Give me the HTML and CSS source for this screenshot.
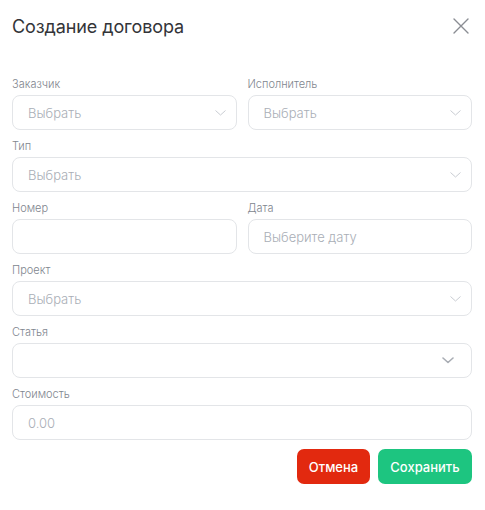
FILE: index.html
```html
<!DOCTYPE html>
<html lang="ru">
<head>
<meta charset="utf-8">
<link rel="stylesheet" href="styles.css">
</head>
<body>
<div class="modal">
  <div class="header">
    <h1 class="title">Создание договора</h1>
    <button class="close" aria-label="Закрыть">
      <svg width="16" height="16" viewBox="0 0 16 16"><path d="M1 1L15 15M15 1L1 15" stroke="#8a8d93" stroke-width="1.4" fill="none" stroke-linecap="round"/></svg>
    </button>
  </div>
  <div class="form">
    <div class="field">
      <div class="label">Заказчик</div>
      <div class="control select"><span class="ph">Выбрать</span><svg class="chev" width="11" height="6" viewBox="0 0 11 6"><path d="M0.5 0.5L5.5 5L10.5 0.5" stroke="#c9ccd2" stroke-width="1" fill="none"/></svg></div>
    </div>
    <div class="field">
      <div class="label">Исполнитель</div>
      <div class="control select"><span class="ph">Выбрать</span><svg class="chev" width="11" height="6" viewBox="0 0 11 6"><path d="M0.5 0.5L5.5 5L10.5 0.5" stroke="#c9ccd2" stroke-width="1" fill="none"/></svg></div>
    </div>
    <div class="field wide">
      <div class="label">Тип</div>
      <div class="control select"><span class="ph">Выбрать</span><svg class="chev" width="11" height="6" viewBox="0 0 11 6"><path d="M0.5 0.5L5.5 5L10.5 0.5" stroke="#c9ccd2" stroke-width="1" fill="none"/></svg></div>
    </div>
    <div class="field">
      <div class="label">Номер</div>
      <div class="control"></div>
    </div>
    <div class="field">
      <div class="label">Дата</div>
      <div class="control"><span class="ph">Выберите дату</span></div>
    </div>
    <div class="field wide">
      <div class="label">Проект</div>
      <div class="control select"><span class="ph">Выбрать</span><svg class="chev" width="11" height="6" viewBox="0 0 11 6"><path d="M0.5 0.5L5.5 5L10.5 0.5" stroke="#c9ccd2" stroke-width="1" fill="none"/></svg></div>
    </div>
    <div class="field wide">
      <div class="label">Статья</div>
      <div class="control select alt"><span class="ph"></span><svg class="chev" width="12" height="7" viewBox="0 0 12 7"><path d="M1 1L6 5.5L11 1" stroke="#a9adb4" stroke-width="1.6" fill="none" stroke-linecap="round" stroke-linejoin="round"/></svg></div>
    </div>
    <div class="field wide">
      <div class="label">Стоимость</div>
      <div class="control"><span class="ph">0.00</span></div>
    </div>
  </div>
  <div class="actions">
    <button class="btn cancel">Отмена</button>
    <button class="btn save">Сохранить</button>
  </div>
</div>
</body>
</html>
```
FILE: styles.css
```css
* { box-sizing: border-box; }
html, body { margin: 0; background: #fff; }
body {
  font-family: "Inter", "Noto Sans", sans-serif;
  color: #333;
}
.modal {
  width: 485px;
  padding: 0 13px 0 12px;
}
.header {
  height: 52px;
  display: flex;
  align-items: center;
  justify-content: space-between;
  margin-bottom: 26px;
}
.title {
  margin: 0;
  font-size: 18px;
  font-weight: 400;
  color: #333438;
  letter-spacing: -0.1px;
}
.close {
  border: 0;
  background: none;
  padding: 0;
  margin-right: 3px;
  width: 16px;
  height: 16px;
  display: flex;
}
.form {
  display: grid;
  grid-template-columns: 1fr 1fr;
  column-gap: 11px;
  row-gap: 10px;
}
.field { display: flex; flex-direction: column; }
.field.wide { grid-column: 1 / 3; }
.label {
  font-size: 11px;
  line-height: 12px;
  font-weight: 300;
  color: #80858e;
  margin-bottom: 5px;
}
.control {
  height: 35px;
  border: 1px solid #e3e5e8;
  border-radius: 8px;
  display: flex;
  align-items: center;
  justify-content: space-between;
  padding: 0 10px 0 15px;
}
.ph {
  font-size: 13px;
  font-weight: 300;
  color: #a9aeb6;
}
.chev { margin-right: 0; }
.select.alt { padding-right: 17px; }
.actions {
  display: flex;
  justify-content: flex-end;
  gap: 8px;
  margin-top: 9px;
}
.btn {
  height: 35px;
  border: 0;
  border-radius: 7px;
  color: #fff;
  font-family: "Inter", "Noto Sans", sans-serif;
  font-size: 13px;
  font-weight: 500;
  padding: 0 11px;
}
.cancel { background: #e2290f; width: 73px; }
.save { background: #1dc580; width: 94px; }
```
